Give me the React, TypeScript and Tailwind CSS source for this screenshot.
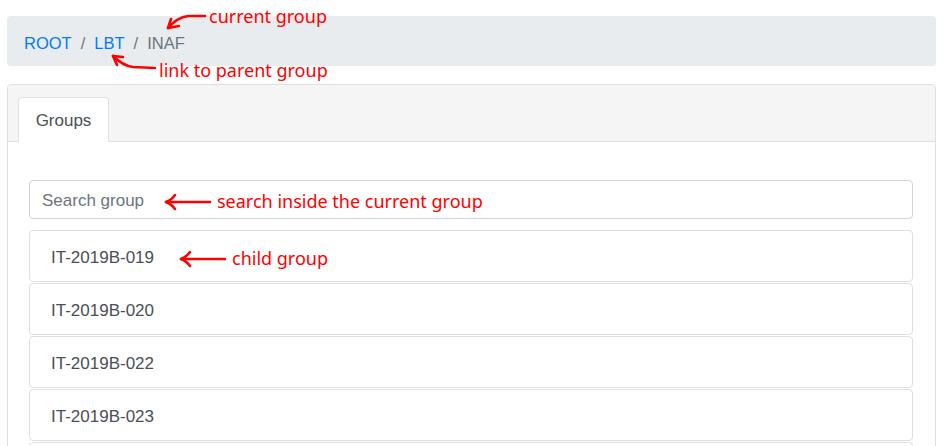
export default function App() {
  const items = ["IT-2019B-019", "IT-2019B-020", "IT-2019B-022", "IT-2019B-023", "IT-2019B-024"];
  const ann = "font-['Noto_Sans',sans-serif] text-[18px] text-[#ff0000] leading-none whitespace-nowrap";
  return (
    <div className="relative w-[945px] h-[446px] overflow-hidden bg-white font-['Liberation_Sans',Arial,sans-serif] text-[17px]">
      <div className="px-[7px] pt-4 pr-[9px]">
        <div className="h-[50px] rounded bg-[#e9ecef] flex items-center pl-[17px] pt-[4px] text-[16.5px]">
          <span className="text-[#007bff]">ROOT</span>
          <span className="text-[#6c757d] px-[9px]">/</span>
          <span className="text-[#007bff]">LBT</span>
          <span className="text-[#6c757d] px-[9px]">/</span>
          <span className="text-[#6c757d]">INAF</span>
        </div>
        <div className="mt-[18px] border border-[#dfdfdf] rounded h-[420px] bg-white">
          <div className="bg-[#f5f5f5] border-b border-[#dfdfdf] h-[57px] pt-3 pl-[10px] flex items-end rounded-t">
            <div className="h-[45px] w-[91px] -mb-px bg-white border border-[#dee2e6] border-b-white rounded-t flex items-center justify-center pt-[3px] text-[#495057]">
              Groups
            </div>
          </div>
          <div className="pt-[38px] pl-[21px] pr-[22px]">
            <div className="h-[39px] border border-[#ced4da] rounded flex items-center pl-3 pt-[3px] text-[#6c757d]">
              Search group
            </div>
            <div className="mt-[11px] flex flex-col gap-px">
              {items.map((t) => (
                <div key={t} className="h-[52px] border border-[#dfdfdf] rounded flex items-center pl-[21px] pt-[3px] text-[#495057]">
                  {t}
                </div>
              ))}
            </div>
          </div>
        </div>
      </div>

      {/* annotations */}
      <svg className="absolute left-0 top-0" width="945" height="446" fill="none" stroke="#ff0000" strokeWidth="2.6" strokeLinecap="round" strokeLinejoin="round">
        <path d="M205 16 L188 16 C180 17 174 21 168 28" />
        <path d="M171 19 L168 28 L179 26" />
        <path d="M155 68 L133 67 C125 66 119 62 113 56" />
        <path d="M123 57 L113 56 L117 65" />
        <path d="M210 202 L166 202" />
        <path d="M175 195 C172 199 169 201 166 202 C169 203 172 205 175 209" />
        <path d="M225 259 L181 259" />
        <path d="M190 252 C187 256 184 258 181 259 C184 260 187 262 190 266" />
      </svg>
      <div className={`absolute left-[209px] top-[7px] ${ann}`}>current group</div>
      <div className={`absolute left-[159px] top-[61px] ${ann}`}>link to parent group</div>
      <div className={`absolute left-[217px] top-[192px] ${ann}`}>search inside the current group</div>
      <div className={`absolute left-[232px] top-[249px] ${ann}`}>child group</div>
    </div>
  );
}
